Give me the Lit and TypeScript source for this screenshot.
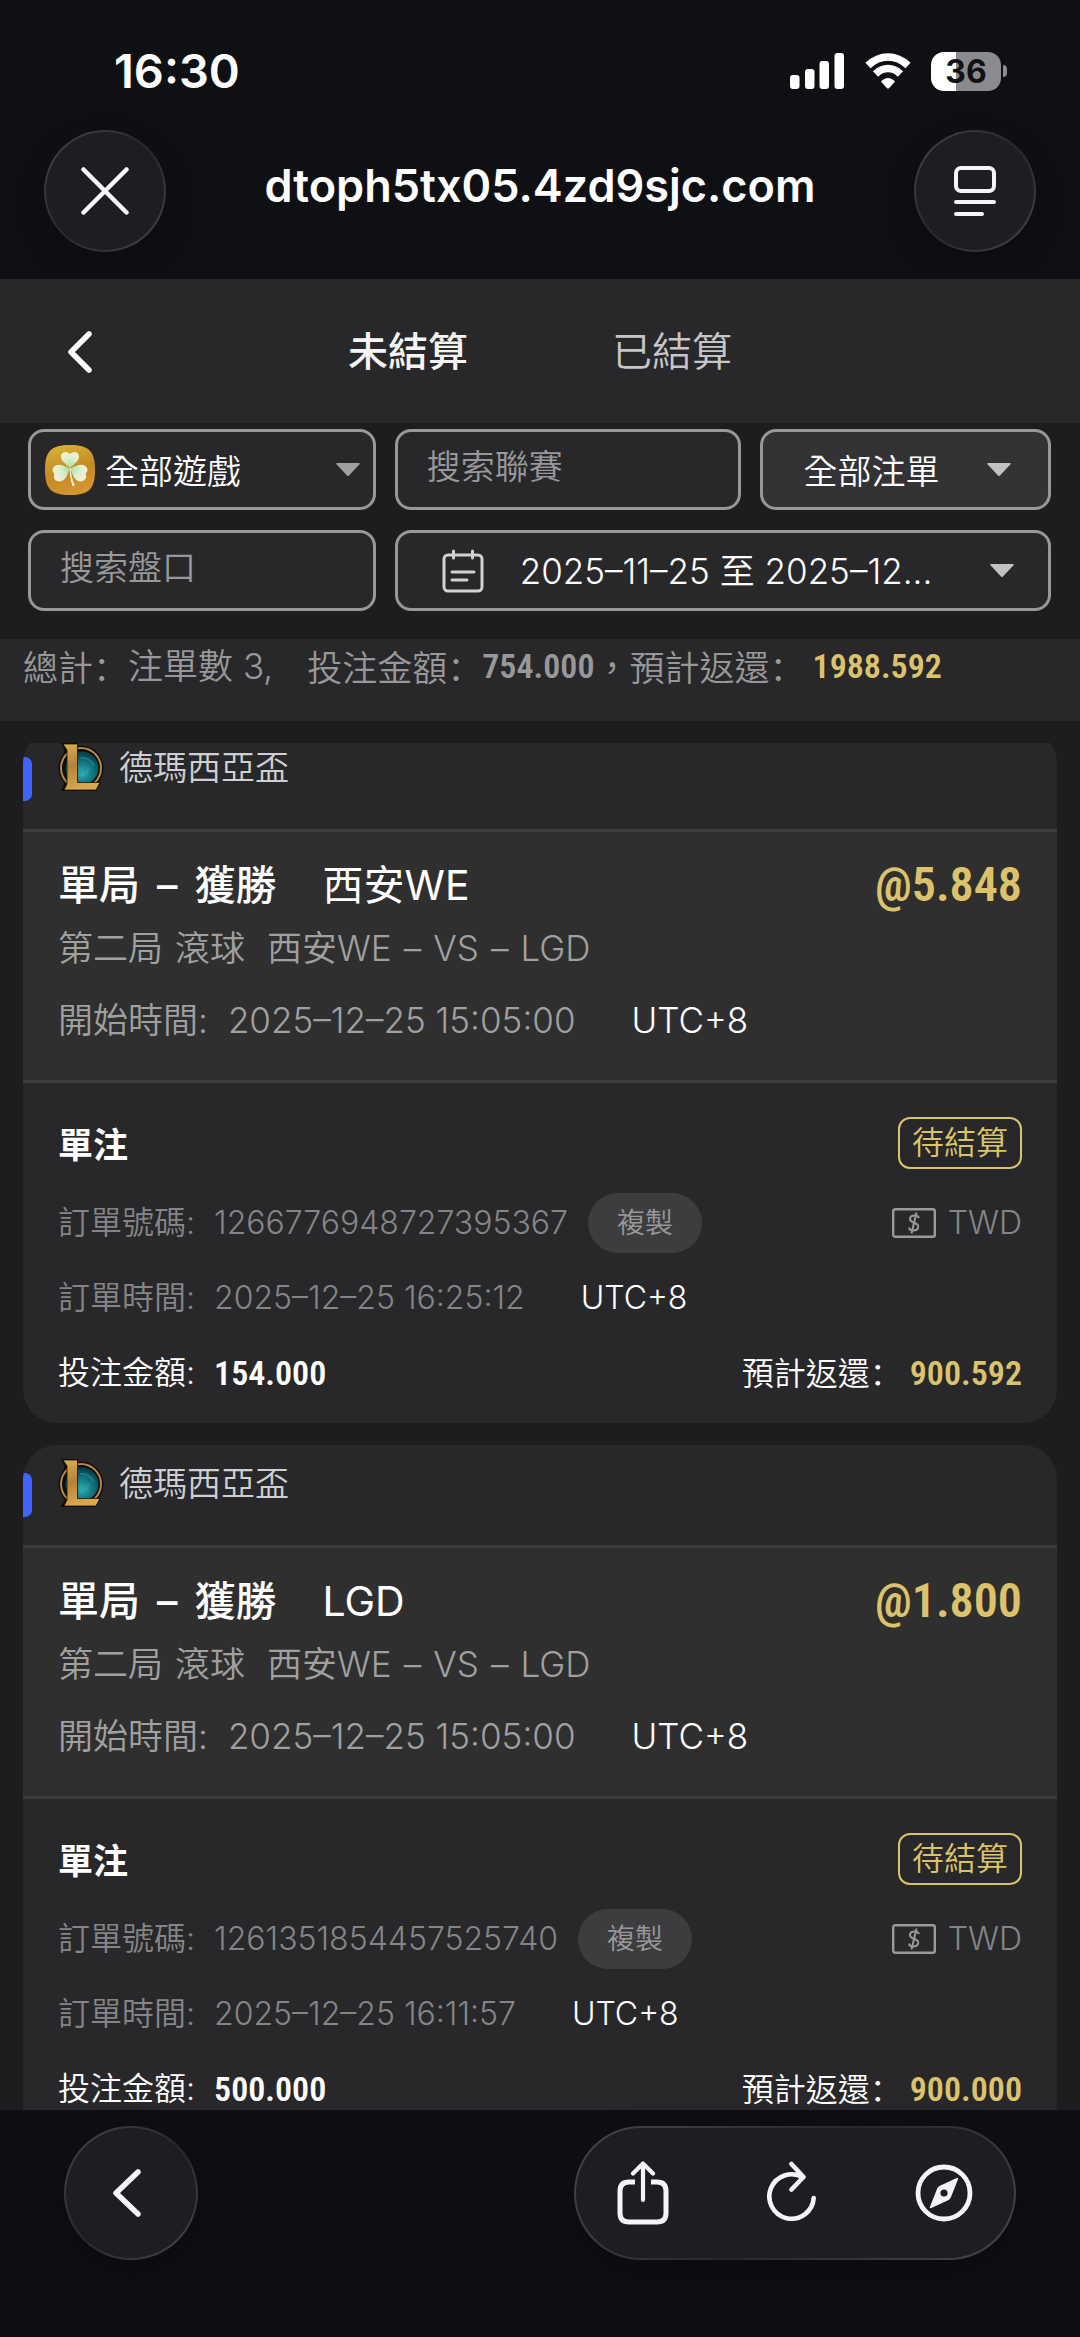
import { LitElement, html, css, svg } from "lit";
import { customElement, property } from "lit/decorators.js";

interface Bet {
  league: string;
  market: string;
  pick: string;
  odds: string;
  stage: string;
  match: string;
  startTime: string;
  betType: string;
  status: string;
  orderNo: string;
  currency: string;
  orderTime: string;
  stake: string;
  payout: string;
}

const BETS: Bet[] = [
  {
    league: "德瑪西亞盃",
    market: "單局 – 獲勝",
    pick: "西安WE",
    odds: "@5.848",
    stage: "第二局 滾球",
    match: "西安WE – VS – LGD",
    startTime: "2025–12–25 15:05:00",
    betType: "單注",
    status: "待結算",
    orderNo: "1266776948727395367",
    currency: "TWD",
    orderTime: "2025–12–25 16:25:12",
    stake: "154.000",
    payout: "900.592",
  },
  {
    league: "德瑪西亞盃",
    market: "單局 – 獲勝",
    pick: "LGD",
    odds: "@1.800",
    stage: "第二局 滾球",
    match: "西安WE – VS – LGD",
    startTime: "2025–12–25 15:05:00",
    betType: "單注",
    status: "待結算",
    orderNo: "1261351854457525740",
    currency: "TWD",
    orderTime: "2025–12–25 16:11:57",
    stake: "500.000",
    payout: "900.000",
  },
];

const base = css`
  * {
    box-sizing: border-box;
  }
  svg {
    display: block;
    flex: none;
  }
  button {
    appearance: none;
    border: 0;
    margin: 0;
    padding: 0;
    background: none;
    color: inherit;
    font: inherit;
  }
  .figure {
    font-family: "Roboto Condensed", Roboto, sans-serif;
    font-weight: 600;
    font-size: 34px;
  }
  .colon {
    font-family: "Noto Sans CJK SC", sans-serif;
  }
`;

const caret = (cls: string) => svg`
  <svg class=${cls} width="24" height="14" viewBox="0 0 24 14" aria-hidden="true">
    <path d="M1 0h22q1.4 0 .5 1.2L13 12.6q-1 1-2 0L.5 1.2Q-.4 0 1 0z" fill="currentColor" />
  </svg>`;

const words = (text: string) => text.split(" ").map((w) => html`<span>${w}</span> `);

@customElement("bet-card")
class BetCard extends LitElement {
  @property({ attribute: false }) bet!: Bet;

  static styles = [
    base,
    css`
      :host {
        display: block;
        flex: none;
        border-radius: 34px;
        overflow: hidden;
        background: #28282a;
      }
      .head {
        display: flex;
        align-items: flex-start;
        height: 103px;
        padding-top: 14px;
        border-bottom: 3px solid #3c3c3e;
      }
      .mark {
        width: 9px;
        height: 44px;
        margin: 14px 26px 0 0;
        border-radius: 0 7px 7px 0;
        background: #4164ff;
      }
      .league {
        margin: 0 0 0 15px;
        font-size: 34px;
        line-height: 50px;
        font-weight: 350;
        color: #cfcfd1;
      }
      .event {
        padding: 24px 35px 36px;
        background: #2f2f2f;
        border-bottom: 3px solid #3c3c3e;
        font-weight: 350;
        font-size: 35px;
        line-height: 48px;
        color: #a0a0a0;
      }
      .words {
        display: flex;
        gap: 12px;
      }
      .title {
        display: flex;
        justify-content: space-between;
        align-items: center;
        font-size: 41px;
        line-height: 58px;
        font-weight: 500;
        color: #fff;
      }
      .title .words {
        gap: 17px;
      }
      .name {
        display: flex;
        gap: 46px;
      }
      .pick {
        font-weight: 400;
      }
      .odds {
        font-size: 48px;
        color: #dcc36b;
      }
      .match {
        display: flex;
        gap: 22px;
        margin-top: 10px;
      }
      .start {
        display: flex;
        margin-top: 24px;
      }
      .start .value {
        margin-left: 20px;
      }
      .zone {
        margin-left: 56px;
        color: #fff;
      }
      .order {
        padding: 34px 35px 13px;
        font-size: 32px;
        line-height: 48px;
        font-weight: 350;
        color: #858587;
      }
      .kind {
        display: flex;
        justify-content: space-between;
        align-items: center;
        margin-bottom: 16px;
      }
      .type {
        padding-top: 4px;
        font-size: 35px;
        font-weight: 600;
        color: #fff;
      }
      .status {
        padding: 0 12px;
        border: 2px solid #dcc36b;
        border-radius: 12px;
        color: #dcc36b;
      }
      .line {
        display: flex;
        align-items: center;
        height: 75px;
      }
      .line .value {
        margin-left: 19px;
      }
      .copy {
        height: 60px;
        margin-left: 20px;
        padding: 0 29px;
        border-radius: 30px;
        background: #3d3d3f;
        font-size: 28px;
        color: #98989a;
      }
      .currency {
        display: flex;
        align-items: center;
        gap: 12px;
        margin-left: auto;
      }
      .money {
        color: #fff;
      }
      .payout {
        margin-left: auto;
      }
      .gain {
        margin-left: 8px;
        color: #dcc36b;
      }
    `,
  ];

  render() {
    const b = this.bet;
    return html`
      <header class="head">
        <span class="mark"></span>
        <svg width="46" height="48" viewBox="0 0 46 48" aria-hidden="true">
          <defs>
            <linearGradient id="gold" x1="0" y1="0" x2="0.3" y2="1">
              <stop offset="0" stop-color="#dcae58" />
              <stop offset="0.5" stop-color="#b68336" />
              <stop offset="1" stop-color="#d9a850" />
            </linearGradient>
            <radialGradient id="sea" cx="0.5" cy="0.65" r="0.6">
              <stop offset="0" stop-color="#2fa9b0" />
              <stop offset="0.6" stop-color="#10707a" />
              <stop offset="1" stop-color="#07414c" />
            </radialGradient>
          </defs>
          <circle cx="23" cy="25" r="22.5" fill="#0e0d0c" />
          <path d="M3 0h17v40h23l-5 8H3l3-7V6z" fill="#0e0d0c" />
          <circle cx="23" cy="25" r="20" fill="none" stroke="#b58a43" stroke-width="2" />
          <circle cx="24" cy="25" r="16.5" fill="url(#sea)" />
          <path d="M22 15q10-1 14 8M22 33q9-1 8-8" fill="none" stroke="#4cc0c3" stroke-width="1.6" opacity="0.3" />
          <path d="M5 1H19.5V39.5H42L38 47H6L9 41V7z" fill="url(#gold)" stroke="#17110a" stroke-width="0.8" />
        </svg>
        <h2 class="league">${b.league}</h2>
      </header>
      <section class="event">
        <div class="title">
          <div class="name">
            <span class="words">${words(b.market)}</span><span class="pick">${b.pick}</span>
          </div>
          <span class="figure odds">${b.odds}</span>
        </div>
        <div class="match">
          <span class="words">${words(b.stage)}</span><span class="words">${words(b.match)}</span>
        </div>
        <div class="start">
          <span>開始時間:</span><span class="value">${b.startTime}</span><span class="zone">UTC+8</span>
        </div>
      </section>
      <section class="order">
        <div class="kind">
          <span class="type">${b.betType}</span>
          <span class="status">${b.status}</span>
        </div>
        <div class="line">
          <span>訂單號碼:</span><span class="value">${b.orderNo}</span>
          <button class="copy" type="button">複製</button>
          <span class="currency">
            <svg width="44" height="30" viewBox="0 0 44 30" fill="none" stroke="#9a9a9c" stroke-width="2.4" aria-hidden="true">
              <rect x="1.2" y="1.2" width="41.6" height="27.6" rx="2" />
              <path d="M27 10q-1-2.500-4.500-2.500-4 0-4.500 3.200 0 2.800 4 4 4.600 1.400 4.200 4.300-.6 3.500-4.700 3.500-4 0-4.500-3M24.500 4.500l-5 21" stroke-width="2" />
            </svg>
            ${b.currency}
          </span>
        </div>
        <div class="line">
          <span>訂單時間:</span><span class="value">${b.orderTime}</span><span class="zone">UTC+8</span>
        </div>
        <div class="line money">
          <span>投注金額:</span><span class="value figure">${b.stake}</span>
          <span class="payout">預計返還<span class="colon">：</span></span>
          <span class="figure gain">${b.payout}</span>
        </div>
      </section>
    `;
  }
}

@customElement("app-root")
class AppRoot extends LitElement {
  static styles = [
    base,
    css`
      :host {
        display: flex;
        flex-direction: column;
        height: 100vh;
        overflow: hidden;
        background: #1d1d1f;
        color: #fff;
        font-family: Inter, "Noto Sans CJK TC", sans-serif;
      }
      .top {
        padding: 41px 44px 27px;
        background: #0f1014;
      }
      .system {
        display: flex;
        align-items: center;
        padding: 0 29px 0 70px;
        height: 60px;
      }
      .clock {
        font-size: 47px;
        line-height: 60px;
        font-weight: 600;
        margin-right: auto;
      }
      .wifi {
        margin: 0 20px 0 21px;
      }
      .battery {
        width: 70px;
        border-radius: 13px;
        background: linear-gradient(90deg, #fff 36%, #8b8b8d 36%);
        color: #111216;
        font-size: 32px;
        line-height: 39px;
        font-weight: 700;
        text-align: center;
      }
      .nub {
        width: 4px;
        height: 12px;
        margin-left: 2px;
        border-radius: 0 6px 6px 0;
        background: #8b8b8d;
      }
      .nav {
        display: flex;
        align-items: center;
        justify-content: space-between;
        margin-top: 29px;
      }
      .glass {
        display: flex;
        align-items: center;
        justify-content: center;
        border: 2px solid transparent;
        background:
          linear-gradient(#1c1e23, #1c1e23) padding-box,
          linear-gradient(135deg, #44464c, #26282d 50%, #44464c) border-box;
        box-shadow: 0 12px 32px rgba(0, 0, 0, 0.25);
      }
      .round {
        width: 122px;
        height: 122px;
        border-radius: 50%;
      }
      .address {
        margin: 0;
        padding-bottom: 10px;
        font-size: 45px;
        line-height: 60px;
        font-weight: 600;
      }
      .tabs {
        display: grid;
        grid-template-columns: 1fr auto 1fr;
        align-items: center;
        height: 144px;
        padding: 2px 60px 0;
        background: #28282a;
      }
      .back {
        justify-self: start;
        padding: 8px;
      }
      .tablist {
        display: flex;
        gap: 144px;
      }
      .tab {
        font-size: 40px;
        line-height: 60px;
        font-weight: 350;
        color: #c6c6c8;
      }
      .tab.on {
        font-weight: 500;
        color: #f4f4f4;
      }
      .filters {
        display: grid;
        gap: 20px;
        padding: 6px 29px 28px 28px;
      }
      .row {
        display: grid;
        grid-template-columns: minmax(0, 347fr) minmax(0, 346fr) minmax(0, 290fr);
        gap: 19px;
      }
      .field {
        display: flex;
        align-items: center;
        width: 100%;
        min-width: 0;
        height: 81px;
        border: 3px solid #98989a;
        border-radius: 16px;
        background: #28282a;
        color: #fff;
        font-family: inherit;
        font-size: 34px;
        font-weight: 350;
      }
      .field select {
        appearance: none;
        flex: 1;
        min-width: 0;
        border: 0;
        padding: 4px 0 0;
        background: none;
        color: #fff;
        font: inherit;
      }
      input.field {
        padding: 0 28px 6px 29px;
      }
      input.field::placeholder {
        color: #98989a;
        opacity: 1;
      }
      .game {
        padding: 0 13px 0 14px;
      }
      .game select {
        margin-left: 10px;
      }
      .kind {
        padding: 0 37px 0 40px;
        background: #333335;
      }
      .dates {
        grid-column: 2 / 4;
        padding: 0 34px 0 44px;
        font-size: 35px;
      }
      .range {
        margin: 0 auto 0 36px;
        padding-bottom: 4px;
        white-space: nowrap;
      }
      .dim {
        color: #a0a0a2;
      }
      .lit {
        color: #c2c2c4;
      }
      .summary {
        display: flex;
        height: 82px;
        padding: 2px 23px 0;
        background: #28282a;
        font-size: 35px;
        line-height: 50px;
        font-weight: 350;
        color: #98989a;
        white-space: pre;
      }
      .count {
        margin-right: 34px;
      }
      .gain {
        margin-left: 8px;
        color: #dcc36b;
      }
      .viewport {
        flex: 1;
        min-height: 0;
        margin-top: 22px;
        padding: 0 23px;
        overflow: hidden;
      }
      .list {
        display: grid;
        gap: 22px;
        margin-top: -14px;
      }
      .bottom {
        display: flex;
        justify-content: space-between;
        padding: 16px 64px 77px;
        background: #0e0f13;
      }
      .prev {
        width: 134px;
        height: 134px;
        border-radius: 50%;
      }
      .tools {
        width: 442px;
        height: 134px;
        padding: 0 41px;
        border-radius: 67px;
        justify-content: space-between;
      }
    `,
  ];

  render() {
    return html`
      <header class="top">
        <div class="system">
          <span class="clock">16:30</span>
          <svg width="54" height="36" viewBox="0 0 54 36" fill="#fff" aria-hidden="true">
            <rect x="0" y="22" width="9.500" height="14" rx="3" />
            <rect x="15" y="16" width="9.500" height="20" rx="3" />
            <rect x="29.500" y="8" width="9.500" height="28" rx="3" />
            <rect x="44.500" y="0" width="9.500" height="36" rx="3" />
          </svg>
          <svg class="wifi" width="46" height="36" viewBox="0 0 46 36" aria-hidden="true">
            <g fill="none" stroke="#fff" stroke-width="7.500">
              <path d="M3 12.500Q12 4 23 4t20 8.500" />
              <path d="M10.500 21Q16 15.500 23 15.500T35.500 21" />
            </g>
            <path d="M16 28.500q3.200-3.500 7-3.500t7 3.500L24.200 35q-1.200 1-2.400 0z" fill="#fff" />
          </svg>
          <span class="battery">36</span>
          <span class="nub"></span>
        </div>
        <nav class="nav">
          <button class="glass round" type="button" aria-label="關閉">
            <svg width="48" height="48" viewBox="0 0 48 48" fill="none" stroke="#f4f5f7" stroke-width="4.500" stroke-linecap="round">
              <path d="M2.500 2.500l43 43M45.500 2.500l-43 43" />
            </svg>
          </button>
          <h1 class="address">dtoph5tx05.4zd9sjc.com</h1>
          <button class="glass round" type="button" aria-label="頁面選單">
            <svg width="42" height="52" viewBox="0 0 42 52" fill="none" stroke="#f4f5f7" stroke-width="4" stroke-linecap="round">
              <rect x="2" y="3" width="38" height="23" rx="5" />
              <path d="M2 37h38M2 49h26" />
            </svg>
          </button>
        </nav>
      </header>

      <div class="tabs">
        <button class="back" type="button" aria-label="返回">
          <svg width="24" height="42" viewBox="0 0 24 42" fill="none" stroke="#fff" stroke-width="5.500" stroke-linecap="round" stroke-linejoin="round">
            <path d="M21 3L3 21l18 18" />
          </svg>
        </button>
        <div class="tablist" role="tablist">
          <button class="tab on" type="button" role="tab" aria-selected="true">未結算</button>
          <button class="tab" type="button" role="tab" aria-selected="false">已結算</button>
        </div>
      </div>

      <form class="filters">
        <div class="row">
          <div class="field game">
            <svg width="50" height="50" viewBox="0 0 50 50" aria-hidden="true">
              <defs>
                <linearGradient id="tile" x1="0.2" y1="0" x2="0.5" y2="1">
                  <stop offset="0" stop-color="#d8b23a" />
                  <stop offset="0.55" stop-color="#c58a22" />
                  <stop offset="1" stop-color="#d6952f" />
                </linearGradient>
                <radialGradient id="leaf" gradientUnits="userSpaceOnUse" cx="25" cy="23" r="17">
                  <stop offset="0" stop-color="#a6e0a0" />
                  <stop offset="0.6" stop-color="#dcf0cf" />
                  <stop offset="1" stop-color="#f6eed9" />
                </radialGradient>
              </defs>
              <path d="M25 0C44 0 50 6 50 25S44 50 25 50 0 44 0 25 6 0 25 0z" fill="url(#tile)" />
              <g fill="url(#leaf)">
                <path d="M25 23c-4-4-9-7-9-11.500C16 6.500 22 5.500 25 9c3-3.500 9-2.500 9 2.500C34 16 29 19 25 23z" />
                <path d="M24.500 23.500c-5-2.500-10-5-14-3-4.500 2.500-3 7-1 8-2 4 .5 8 5 8 5 0 8-6 10-13z" />
                <path d="M25.500 23.500c5-2.500 10-5 14-3 4.500 2.500 3 7 1 8 2 4-.5 8-5 8-5 0-8-6-10-13z" />
              </g>
              <path d="M24.500 23c.5 7 .8 12 3.200 18.500l2-1.200C27 34.500 26 29 25.600 23z" fill="#fbf6e4" />
            </svg>
            <select aria-label="遊戲">
              <option>全部遊戲</option>
            </select>
            ${caret("dim")}
          </div>
          <input class="field" type="text" placeholder="搜索聯賽" aria-label="搜索聯賽" />
          <div class="field kind">
            <select aria-label="注單">
              <option>全部注單</option>
            </select>
            ${caret("lit")}
          </div>
        </div>
        <div class="row">
          <input class="field" type="text" placeholder="搜索盤口" aria-label="搜索盤口" />
          <button class="field dates" type="button">
            <svg width="42" height="44" viewBox="0 0 42 44" fill="none" stroke="#d2d2d4" stroke-width="3" stroke-linecap="round" aria-hidden="true">
              <rect x="2" y="6" width="38" height="36" rx="4" />
              <path d="M11.500 2v7M30.500 2v7M10 23h22M10 31h15" />
            </svg>
            <span class="range">2025–11–25 至 2025–12...</span>
            ${caret("lit")}
          </button>
        </div>
      </form>

      <div class="summary"
        ><span>總計<span class="colon">：</span></span><span class="count">注單數 3,</span><span>投注金額<span class="colon">：</span></span><span class="figure">754.000</span><span>，預計返還<span class="colon">：</span></span><span class="figure gain">1988.592</span></div>

      <main class="viewport">
        <div class="list">${BETS.map((b) => html`<bet-card .bet=${b}></bet-card>`)}</div>
      </main>

      <footer class="bottom">
        <button class="glass prev" type="button" aria-label="上一頁">
          <svg width="36" height="48" viewBox="0 0 36 48" fill="none" stroke="#f4f5f7" stroke-width="5.500" stroke-linecap="round" stroke-linejoin="round">
            <path d="M25 3L3 24l22 21" />
          </svg>
        </button>
        <div class="glass tools">
          <button type="button" aria-label="分享">
            <svg width="52" height="64" viewBox="0 0 52 64" fill="none" stroke="#f4f5f7" stroke-width="5" stroke-linecap="round" stroke-linejoin="round">
              <path d="M18 21h-6q-9 0-9 9v22q0 9 9 9h28q9 0 9-9V30q0-9-9-9h-6" stroke-linecap="butt" />
              <path d="M26 3v36M16 12.500L26 2.500l10 10" stroke-width="4.200" />
            </svg>
          </button>
          <button type="button" aria-label="重新整理">
            <svg width="50" height="64" viewBox="0 0 50 64" fill="none" stroke="#f4f5f7" stroke-width="4.600" stroke-linecap="round" stroke-linejoin="round">
              <path d="M46.700 37A22.200 22.200 0 1 1 36 16.500M24.500 3L36.500 16 24.500 28.500" />
            </svg>
          </button>
          <button type="button" aria-label="瀏覽器">
            <svg width="58" height="58" viewBox="0 0 58 58" aria-hidden="true">
              <circle cx="29" cy="29" r="26" fill="none" stroke="#f4f5f7" stroke-width="4.800" />
              <path d="M42.500 14.500L35 33.500q-.6 1.200-1.700 1.900L15.500 43.500 23 24.600q.6-1.300 1.800-1.900z" fill="#f4f5f7" stroke="#f4f5f7" stroke-width="1.500" stroke-linejoin="round" />
              <circle cx="29" cy="29" r="3.600" fill="#1c1e23" />
            </svg>
          </button>
        </div>
      </footer>
    `;
  }
}
